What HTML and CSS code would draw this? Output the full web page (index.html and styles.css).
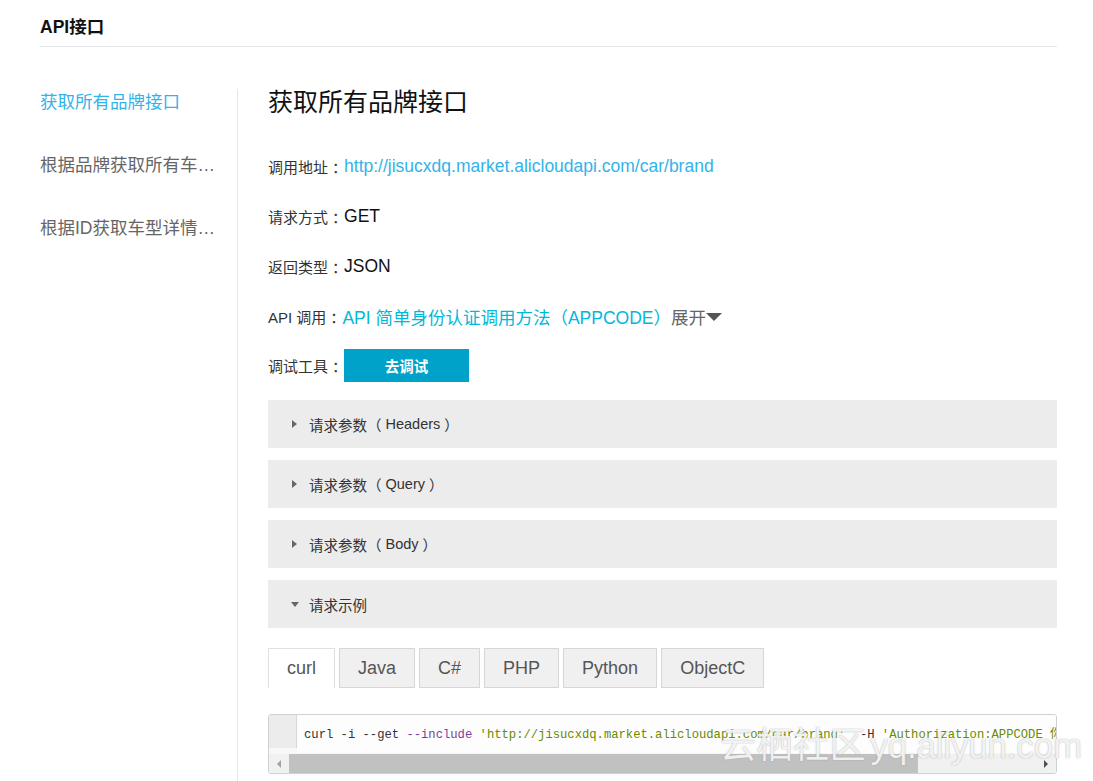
FILE: index.html
```html
<!DOCTYPE html>
<html lang="zh-CN">
<head>
<meta charset="utf-8">
<title>API接口</title>
<link rel="stylesheet" href="styles.css">
</head>
<body>
<div class="page">
  <div class="header">API接口</div>
  <div class="main">
    <nav class="nav">
      <a class="nav-item active">获取所有品牌接口</a>
      <a class="nav-item">根据品牌获取所有车型接口</a>
      <a class="nav-item">根据ID获取车型详情接口</a>
    </nav>
    <section class="content">
      <h1 class="title">获取所有品牌接口</h1>
      <div class="row"><span class="label">调用地址<span class="colon">：</span></span><span class="value url">http://jisucxdq.market.alicloudapi.com/car/brand</span></div>
      <div class="row"><span class="label">请求方式<span class="colon">：</span></span><span class="value">GET</span></div>
      <div class="row"><span class="label">返回类型<span class="colon">：</span></span><span class="value">JSON</span></div>
      <div class="row"><span class="label">API 调用<span class="colon">：</span></span><span class="value link">API 简单身份认证调用方法（APPCODE）</span><span class="value expand">展开</span><span class="caret"></span></div>
      <div class="row"><span class="label">调试工具<span class="colon">：</span></span><span class="btn">去调试</span></div>
      <div class="panel"><span class="tri-right"></span>请求参数<span class="lp">（</span>Headers<span class="rp">）</span></div>
      <div class="panel"><span class="tri-right"></span>请求参数<span class="lp">（</span>Query<span class="rp">）</span></div>
      <div class="panel"><span class="tri-right"></span>请求参数<span class="lp">（</span>Body<span class="rp">）</span></div>
      <div class="panel"><span class="tri-down"></span>请求示例</div>
      <div class="tabs">
        <span class="tab active">curl</span>
        <span class="tab">Java</span>
        <span class="tab">C#</span>
        <span class="tab">PHP</span>
        <span class="tab">Python</span>
        <span class="tab">ObjectC</span>
      </div>
      <div class="code">
        <div class="code-line">
          <div class="gutter"></div>
          <pre class="src">curl -i --get <span class="kw">--include</span> <span class="str">'http://jisucxdq.market.alicloudapi.com/car/brand'</span>  -H <span class="str">'Authorization:APPCODE 你自己的AppCode'</span></pre>
        </div>
        <div class="hscroll">
          <span class="arrow-left"></span>
          <span class="thumb"></span>
          <span class="track"></span>
          <span class="arrow-right"></span>
        </div>
      </div>
    </section>
  </div>
  <div class="watermark"><span class="wm-cn">云栖社区</span> <span class="wm-en">yq.aliyun.com</span></div>
</div>
</body>
</html>
```

FILE: styles.css
```css
html, body {
  margin: 0;
  padding: 0;
  background: #fff;
  overflow: hidden;
}

body {
  font-family: "Liberation Sans", Arial, "Noto Sans CJK SC", sans-serif;
  color: #333;
}

.page {
  width: 1093px;
  height: 781px;
  padding: 0 36px 0 40px;
  box-sizing: border-box;
  position: relative;
  overflow: hidden;
}

.header {
  font-size: 17.5px;
  font-weight: bold;
  color: #111;
  line-height: 20px;
  padding: 17px 0 9px;
  border-bottom: 1px solid #e6e6e6;
}

.main {
  display: flex;
  margin-top: 42px;
}

.nav {
  width: 197px;
  flex: none;
  display: flex;
  flex-direction: column;
  gap: 37px;
  padding-right: 20px;
  box-sizing: border-box;
}

.nav-item {
  font-size: 17.5px;
  line-height: 26px;
  color: #666;
  white-space: nowrap;
  overflow: hidden;
  text-overflow: ellipsis;
}

.nav-item.active {
  color: #33b3ea;
}

.content {
  flex: 1;
  border-left: 1px solid #e8e8e8;
  padding-left: 30px;
  min-height: 720px;
  display: flex;
  flex-direction: column;
  min-width: 0;
}

.title {
  margin: 0 0 26px;
  font-size: 25px;
  font-weight: normal;
  line-height: 26px;
  color: #111;
}

.row {
  height: 50px;
  display: flex;
  align-items: center;
}

.row:nth-of-type(5) {
  height: 48px;
}

.label {
  font-size: 15px;
  color: #333;
  white-space: nowrap;
}

.colon {
  padding-left: 4px;
  margin-right: -3px;
}

.value {
  font-size: 17.5px;
  color: #111;
  white-space: nowrap;
}

.lp {
  margin-right: 4px;
}

.rp {
  margin-left: 4px;
}

.url {
  color: #33b3ea;
}

.link {
  color: #00b8d9;
}

.expand {
  color: #666;
}

.caret {
  width: 0;
  height: 0;
  border-left: 8px solid transparent;
  border-right: 8px solid transparent;
  border-top: 8px solid #555;
  margin-top: 2px;
}

.btn {
  display: inline-flex;
  align-items: center;
  justify-content: center;
  width: 125px;
  height: 33px;
  background: #00a2ca;
  color: #fff;
  font-size: 14.5px;
  font-weight: bold;
}

.panel {
  height: 48px;
  background: #ececec;
  display: flex;
  align-items: center;
  padding-left: 24px;
  font-size: 14.5px;
  color: #333;
  margin-bottom: 12px;
  white-space: nowrap;
}

.row + .panel {
  margin-top: 11px;
}

.tri-right {
  width: 0;
  height: 0;
  border-top: 4px solid transparent;
  border-bottom: 4px solid transparent;
  border-left: 5px solid #666;
  margin-right: 12px;
}

.tri-down {
  width: 0;
  height: 0;
  border-left: 4px solid transparent;
  border-right: 4px solid transparent;
  border-top: 5px solid #666;
  margin-right: 10px;
  margin-left: -1px;
}

.tabs {
  display: flex;
  gap: 4px;
  margin-top: 8px;
  height: 40px;
}

.tab {
  display: flex;
  align-items: center;
  padding: 0 18px;
  height: 40px;
  box-sizing: border-box;
  background: #f0f0f0;
  border: 1px solid #d6d6d6;
  font-size: 18px;
  color: #555;
}

.tab.active {
  background: #fff;
  border-color: #e0e0e0;
  border-bottom: none;
}

.code {
  margin-top: 26px;
  height: 60px;
  box-sizing: border-box;
  border: 1px solid #cdd1d4;
  border-radius: 3px;
  background: #f7f7f7;
  overflow: hidden;
  display: flex;
  flex-direction: column;
}

.code-line {
  display: flex;
  height: 38px;
}

.gutter {
  width: 28px;
  flex: none;
  background: #ececec;
  border-right: 1px solid #d8d8d8;
  height: 33px;
  box-sizing: border-box;
}

.src {
  margin: 0;
  padding: 13px 0 0 7px;
  font-family: "Liberation Mono", "Courier New", monospace;
  font-size: 12.2px;
  line-height: 14px;
  color: #333;
  white-space: pre;
  overflow: hidden;
  background: #fdfdfd;
  flex: 1;
}

.kw {
  color: #7a3e9d;
}

.str {
  color: #6a8a00;
}

.hscroll {
  display: flex;
  align-items: center;
  height: 19px;
  margin-top: 1px;
  background: #f1f1f1;
}

.arrow-left {
  width: 20px;
  flex: none;
  display: flex;
  justify-content: center;
  height: 19px;
}

.arrow-left::before {
  content: "";
  margin-top: 6px;
  width: 0;
  height: 0;
  border-top: 4px solid transparent;
  border-bottom: 4px solid transparent;
  border-right: 4px solid #a3a3a3;
}

.thumb {
  width: 629px;
  height: 19px;
  background: #c1c1c1;
  flex: none;
}

.track {
  flex: 1;
}

.arrow-right {
  width: 20px;
  flex: none;
  display: flex;
  justify-content: center;
  height: 19px;
}

.arrow-right::before {
  content: "";
  margin-top: 6px;
  width: 0;
  height: 0;
  border-top: 4px solid transparent;
  border-bottom: 4px solid transparent;
  border-left: 4px solid #505050;
}

.watermark {
  position: absolute;
  left: 720px;
  top: 721px;
  line-height: 50px;
  white-space: nowrap;
  color: rgba(255, 255, 255, 0.85);
  text-shadow: 0 0 1px rgba(130, 130, 130, 0.55), 0 0 2px rgba(160, 160, 160, 0.35);
  pointer-events: none;
}

.wm-cn {
  font-size: 36px;
  letter-spacing: 0.5px;
}

.wm-en {
  font-size: 35px;
  letter-spacing: -0.2px;
}
```
